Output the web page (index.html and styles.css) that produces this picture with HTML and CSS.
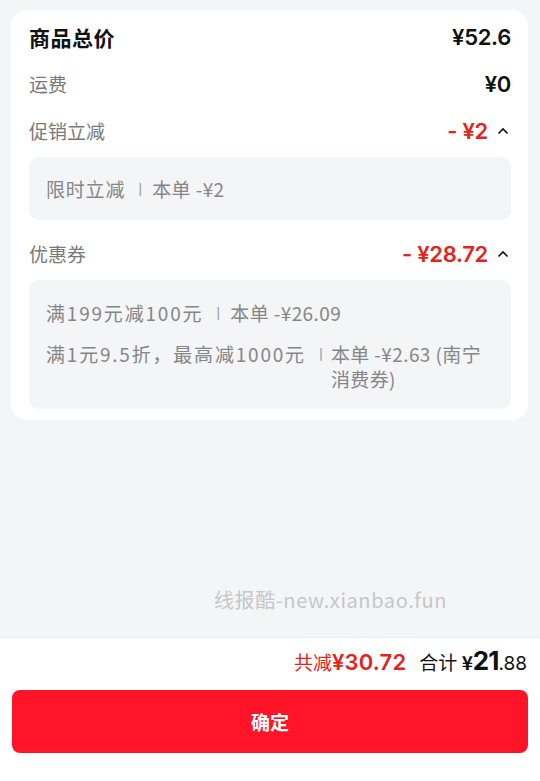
FILE: index.html
```html
<!DOCTYPE html>
<html lang="zh-CN">
  <head>
    <meta charset="utf-8">
    <title>价格明细</title>
    <link rel="stylesheet" href="styles.css">
  </head>
  <body>

  <div class="page">

    <div class="card">

      <div class="row row-total">
        <span class="label">商品总价</span>
        <span class="amount">¥52.6</span>
      </div>

      <div class="row">
        <span class="label muted">运费</span>
        <span class="amount">¥0</span>
      </div>

      <div class="row">
        <span class="label muted">促销立减</span>
        <span class="amount red">- ¥2
          <svg class="chevron" width="12" height="8" viewBox="0 0 12 8"><path d="M1.5 6.5 L6 2 L10.5 6.5" fill="none" stroke="#111" stroke-width="1.6"/></svg>
        </span>
      </div>

      <div class="detail">
        <div class="detail-line">
          <span class="detail-name">限时立减</span>
          <span class="sep">丨</span>
          <span class="detail-value">本单 -¥2</span>
        </div>
      </div>

      <div class="row row-coupon">
        <span class="label muted">优惠券</span>
        <span class="amount red">- ¥28.72
          <svg class="chevron" width="12" height="8" viewBox="0 0 12 8"><path d="M1.5 6.5 L6 2 L10.5 6.5" fill="none" stroke="#111" stroke-width="1.6"/></svg>
        </span>
      </div>

      <div class="detail detail-list">
        <div class="detail-line">
          <span class="detail-name">满199元减100元</span>
          <span class="sep">丨</span>
          <span class="detail-value">本单 -¥26.09</span>
        </div>
        <div class="detail-line">
          <span class="detail-name">满1元9.5折，最高减1000元</span>
          <span class="sep sep-tight">丨</span>
          <span class="detail-value">本单 -¥2.63 (南宁消费券)</span>
        </div>
      </div>

    </div>

    <div class="filler">
      <span class="watermark">线报酷-new.xianbao.fun</span>
    </div>

    <div class="footer">
      <div class="sum">
        <span class="saved">共减<b>¥30.72</b></span>
        <span class="pay">合计 <b class="yen">¥</b><b class="big">21</b><span class="cents">.88</span></span>
      </div>
      <button class="confirm">确定</button>
    </div>

  </div>

  </body>
</html>
```

FILE: styles.css
```css
html {
  height: 100%;
}
body {
  margin: 0;
  padding: 0;
  height: 100%;
  background: #f4f5f7;
  color: #111;
  font-family: "Noto Sans CJK SC", "Noto Sans", sans-serif;
}

.page {
  display: flex;
  flex-direction: column;
  height: 781px;
}

.card {
  margin: 10px 12px 0 11px;
  padding: 3px 17px 11px 18px;
  background: #fff;
  border-radius: 16px;
}

.row {
  display: flex;
  align-items: center;
  justify-content: space-between;
  height: 47px;
}

.row-coupon {
  margin-top: 10px;
}

.label {
  font-size: 19px;
}
.row-total .label {
  font-size: 21px;
  font-weight: bold;
  letter-spacing: 0.5px;
}
.muted {
  color: #7a7a7a;
  font-size: 19px;
}

.amount {
  display: flex;
  align-items: center;
  font-family: "Inter", "Noto Sans CJK SC", sans-serif;
  font-size: 22px;
  font-weight: 600;
  letter-spacing: -0.3px;
}
.red {
  color: #e4231c;
}

.chevron {
  margin-left: 9px;
  margin-right: 2px;
}

.detail {
  margin-top: 3px;
  padding: 19px 17px;
  background: #f4f5f7;
  border-radius: 10px;
  color: #868686;
  font-size: 19px;
  line-height: 25px;
  letter-spacing: 0.8px;
}

.detail-list {
  padding: 20px 17px 18px;
  letter-spacing: 1.8px;
}
.detail-list .detail-line + .detail-line {
  margin-top: 16px;
}

.detail-line {
  display: flex;
  align-items: flex-start;
}

.detail-name {
  flex-shrink: 0;
}

.sep {
  flex-shrink: 0;
  margin: 0 5px 0 8px;
  font-size: 14px;
  letter-spacing: 0;
  color: #999;
}
.sep-tight {
  margin: 0 3px 0 8px;
}

.detail-value {
  flex: 1;
  letter-spacing: 0.4px;
}

.filler {
  flex: 1;
  position: relative;
}

.watermark {
  position: absolute;
  left: 214px;
  bottom: 23px;
  font-family: "Noto Sans CJK SC", "Noto Sans", sans-serif;
  font-size: 20px;
  letter-spacing: 0.6px;
  color: #c6c7c9;
  white-space: nowrap;
}

.footer {
  background: #fff;
  border-top: 1px solid #ececec;
  padding: 7px 12px 28px;
}

.sum {
  display: flex;
  justify-content: flex-end;
  align-items: baseline;
  height: 32px;
  line-height: 32px;
  padding-right: 1px;
}

.saved {
  color: #e4231c;
  font-size: 19px;
}
.saved b {
  font-family: "Inter", "Noto Sans CJK SC", sans-serif;
  font-size: 22px;
  font-weight: 600;
  letter-spacing: 0.2px;
}

.pay {
  margin-left: 13px;
  font-size: 19px;
}
.pay .yen {
  font-size: 19px;
  font-weight: bold;
}
.pay .big {
  font-family: "Inter", sans-serif;
  font-size: 26px;
  font-weight: 700;
  letter-spacing: -1px;
}
.pay .cents {
  font-family: "Inter", sans-serif;
  font-size: 19px;
}

.confirm {
  display: block;
  width: 100%;
  height: 63px;
  margin-top: 13px;
  border: 0;
  border-radius: 8px;
  background: #ff1428;
  color: #fff;
  font-family: "Noto Sans CJK SC", sans-serif;
  font-size: 19px;
  font-weight: bold;
}
```
